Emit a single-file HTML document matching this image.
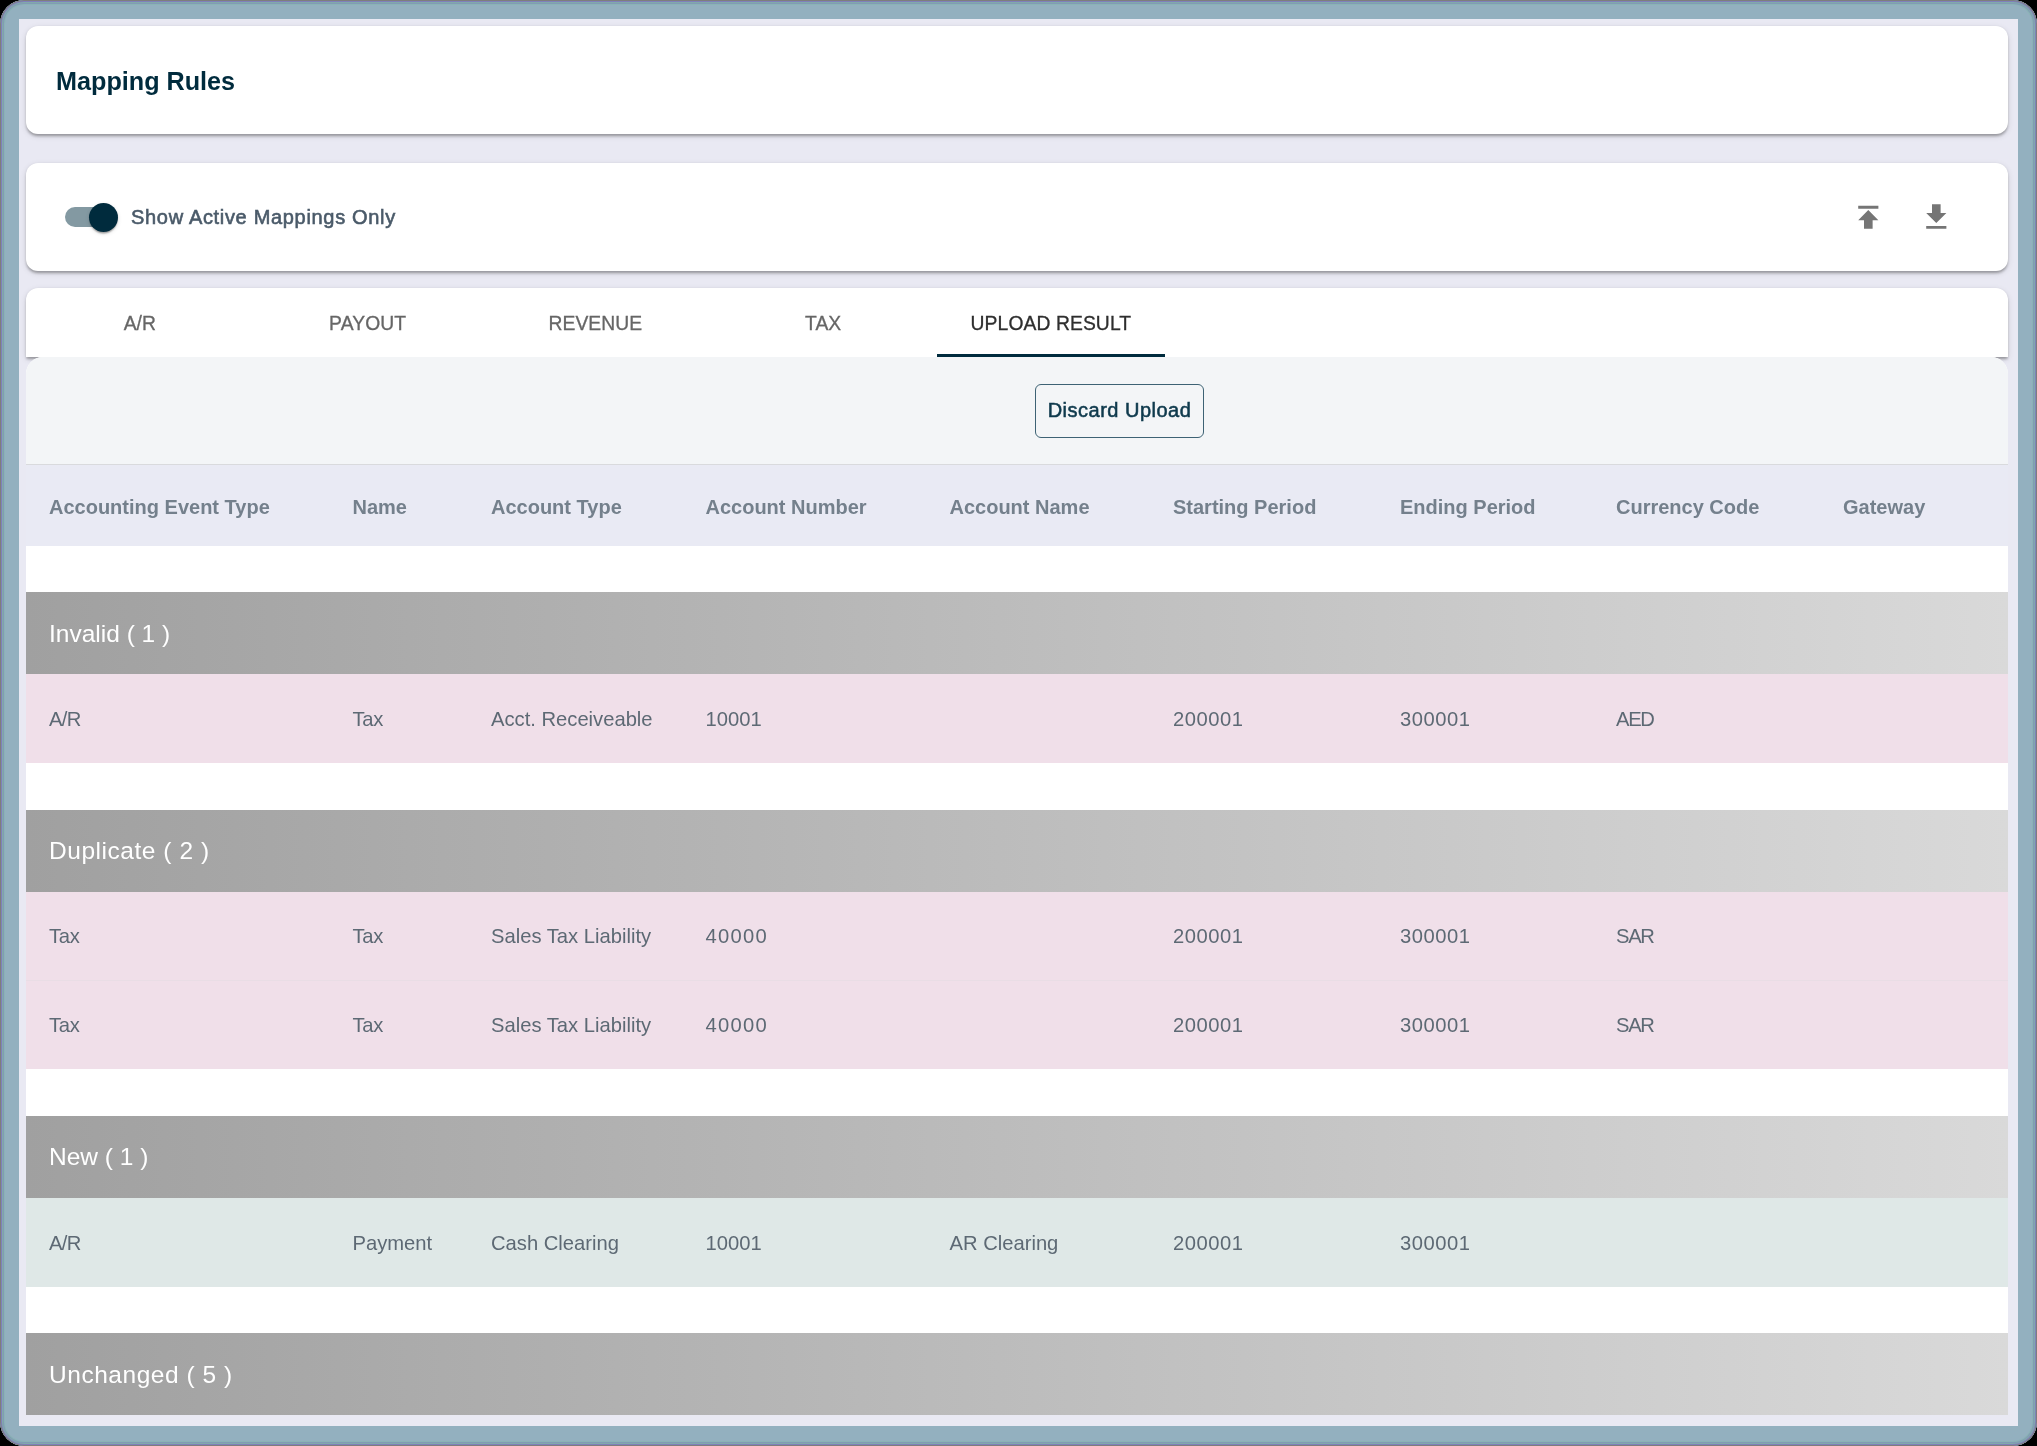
<!DOCTYPE html>
<html lang="en">
<head>
<meta charset="utf-8">
<title>Mapping Rules</title>
<style>
  * { box-sizing: border-box; }
  html, body { margin: 0; padding: 0; }
  body {
    width: 2037px; height: 1446px; overflow: hidden; background: #000;
    font-family: "Liberation Sans", sans-serif;
    -webkit-font-smoothing: antialiased;
  }
  /* macOS window frame (screenshot chrome) */
  .window {
    position: absolute; left: 0; top: 0; width: 2037px; height: 1446px;
    border-radius: 24px; overflow: hidden;
    background: #93b0bf; will-change: transform;
  }
  .window::before { /* thin edge stripes */
    content: ""; position: absolute; inset: 0; border-radius: 24px; pointer-events: none;
    box-shadow: inset 0 0 0 1px #7e7e7c, inset 0 0 0 2px #8080bb, inset 0 0 0 3px #80aaaa, inset 0 0 0 4px #829ab5, inset 0 0 0 5px #8ab3b5;
    z-index: 5;
  }
  .page {
    position: absolute; left: 19px; top: 19px; width: 1999px; height: 1407px;
    background: #e9e9f3; overflow: hidden;
  }
  .card {
    position: absolute; left: 7px; width: 1981.5px; background: #fff; border-radius: 12px;
    box-shadow: 0 3.5px 3px -1.5px rgba(0,0,0,.2), 0 1.5px 2.5px 0 rgba(0,0,0,.12), 0 2px 6px 0 rgba(0,0,0,.12);
  }
  /* title card */
  .title-card { top: 7px; height: 108px; }
  .title-card h1 {
    margin: 0; position: absolute; left: 30px; top: 0.5px; height: 108px; line-height: 108px;
    font-size: 25.2px; font-weight: 700; color: #002b3d; white-space: nowrap;
  }
  /* toolbar card */
  .tool-card { top: 143.5px; height: 108.5px; }
  .switch { position: absolute; left: 39px; top: 44.5px; width: 49px; height: 20px; border-radius: 10px; background: #8399a2; }
  .switch .thumb { position: absolute; left: 23.5px; top: -4.5px; width: 29px; height: 29px; border-radius: 50%; background: #002b3d;
    box-shadow: 0 3px 1.5px -1.5px rgba(0,0,0,.2), 0 1.5px 1.5px 0 rgba(0,0,0,.14), 0 1.5px 4.5px 0 rgba(0,0,0,.12); }
  .switch-label { position: absolute; left: 105px; top: 0; height: 108.5px; line-height: 108.5px; font-size: 20px; letter-spacing: 0.68px; -webkit-text-stroke: 0.6px #4a5a69; color: #4a5a69; white-space: nowrap; }
  .icon-btn { position: absolute; top: 37.2px; width: 34.6px; height: 34.6px; }
  .icon-btn svg { display: block; width: 34.6px; height: 34.6px; fill: #757575; }
  /* tabs */
  .tabs-card { top: 268.5px; height: 69.5px; border-radius: 12px 12px 0 0; }
  .tabs { display: flex; margin: 0; padding: 0; list-style: none; height: 69.5px; }
  .tab { width: 227.75px; height: 69.5px; line-height: 71px; text-align: center; font-size: 19.3px; letter-spacing: .1px; -webkit-text-stroke: .3px currentColor; color: #666; white-space: nowrap; position: relative; }
  .tab.active { color: #2e2e2e; }
  .tab.active::after { content: ""; position: absolute; left: 0; right: 0; bottom: 0; height: 3.5px; background: #002b3d; }
  /* upload panel */
  .panel { position: absolute; left: 7px; top: 338px; width: 1981.5px; height: 1058px; background: #fff; border-radius: 17px 17px 0 0; overflow: hidden; }
  .actions { height: 108px; background: #f3f5f7; border-bottom: 1px solid #d9dadd; position: relative; }
  .btn {
    position: absolute; left: 1009px; top: 26.5px; width: 169px; height: 54px; border: 1px solid #3d6274; border-radius: 6px;
    background: transparent; color: #0f3a4d; font-family: inherit; font-size: 20px; line-height: 51px; letter-spacing: 0.5px; -webkit-text-stroke: 0.55px #0f3a4d; text-align: center; padding: 0; white-space: nowrap;
  }
  table { border-collapse: collapse; table-layout: fixed; width: 1981.5px; }
  th, td { padding: 0 0 0 23px; text-align: left; white-space: nowrap; overflow: hidden; }
  thead th { height: 81px; padding-top: 4px; background: #e9eaf4; color: #74808c; font-size: 20px; font-weight: 700; }
  tr.gap td { height: 47px; background: #fff; padding: 0; }
  tr.gap.first td { height: 46px; }
  tr.group td { height: 82px; padding-top: 1px; color: #fff; font-size: 24.5px; background: linear-gradient(90deg, #a0a0a0, #d9d9d9); }
  tr.row td { height: 88.5px; padding-top: 2px; font-size: 20.2px; color: #5d6974; }
  td.ar { letter-spacing: -.6px; } td.tx { letter-spacing: -.25px; } td.n4 { letter-spacing: 1.3px; } td.n2 { letter-spacing: .5px; } td.cur { letter-spacing: -1.3px; }
  tr.row.r1 td { height: 89px; } tr.row.r4 td { height: 89.5px; } tr.gap.g2 td { height: 46.5px; } tr.gap.g4 td { height: 46px; }
  tr.bad td { background: #f0dfe9; }
  tr.bad + tr.bad td { border-top: 1px solid #e9dde5; }
  tr.good td { background: #dfe8e7; }
</style>
</head>
<body>
<div class="window">
  <main class="page">
    <header class="card title-card"><h1>Mapping Rules</h1></header>

    <section class="card tool-card">
      <div class="switch"><span class="thumb"></span></div>
      <label class="switch-label">Show Active Mappings Only</label>
      <button class="icon-btn" style="left:1824.9px;border:0;background:none;padding:0" aria-label="Upload">
        <svg viewBox="0 0 24 24"><path d="M5 4v2h14V4H5zm0 10h4v6h6v-6h4l-7-7-7 7z"/></svg>
      </button>
      <button class="icon-btn" style="left:1892.9px;border:0;background:none;padding:0" aria-label="Download">
        <svg viewBox="0 0 24 24"><path d="M19 9h-4V3H9v6H5l7 7 7-7zM5 18v2h14v-2H5z"/></svg>
      </button>
    </section>

    <nav class="card tabs-card">
      <ul class="tabs">
        <li class="tab">A/R</li>
        <li class="tab">PAYOUT</li>
        <li class="tab">REVENUE</li>
        <li class="tab">TAX</li>
        <li class="tab active">UPLOAD RESULT</li>
      </ul>
    </nav>

    <section class="panel">
      <div class="actions"><button class="btn">Discard Upload</button></div>
      <table>
        <colgroup>
          <col style="width:303.5px"><col style="width:138.5px"><col style="width:214.5px"><col style="width:244px"><col style="width:223.5px"><col style="width:227px"><col style="width:216px"><col style="width:227px"><col style="width:187.5px">
        </colgroup>
        <thead>
          <tr><th>Accounting Event Type</th><th>Name</th><th>Account Type</th><th>Account Number</th><th>Account Name</th><th>Starting Period</th><th>Ending Period</th><th>Currency Code</th><th>Gateway</th></tr>
        </thead>
        <tbody>
          <tr class="gap first"><td colspan="9"></td></tr>
          <tr class="group"><td colspan="9">Invalid ( 1 )</td></tr>
          <tr class="row bad r1"><td class="ar">A/R</td><td class="tx">Tax</td><td>Acct. Receiveable</td><td>10001</td><td></td><td class="n2">200001</td><td class="n2">300001</td><td class="cur">AED</td><td></td></tr>
          <tr class="gap g2"><td colspan="9"></td></tr>
          <tr class="group"><td colspan="9" style="letter-spacing:.54px">Duplicate ( 2 )</td></tr>
          <tr class="row bad"><td class="tx">Tax</td><td class="tx">Tax</td><td>Sales Tax Liability</td><td class="n4">40000</td><td></td><td class="n2">200001</td><td class="n2">300001</td><td class="cur">SAR</td><td></td></tr>
          <tr class="row bad"><td class="tx">Tax</td><td class="tx">Tax</td><td>Sales Tax Liability</td><td class="n4">40000</td><td></td><td class="n2">200001</td><td class="n2">300001</td><td class="cur">SAR</td><td></td></tr>
          <tr class="gap"><td colspan="9"></td></tr>
          <tr class="group"><td colspan="9">New ( 1 )</td></tr>
          <tr class="row good r4"><td class="ar">A/R</td><td>Payment</td><td>Cash Clearing</td><td>10001</td><td>AR Clearing</td><td class="n2">200001</td><td class="n2">300001</td><td></td><td></td></tr>
          <tr class="gap g4"><td colspan="9"></td></tr>
          <tr class="group"><td colspan="9" style="letter-spacing:.54px">Unchanged ( 5 )</td></tr>
        </tbody>
      </table>
    </section>
  </main>
</div>
</body>
</html>
